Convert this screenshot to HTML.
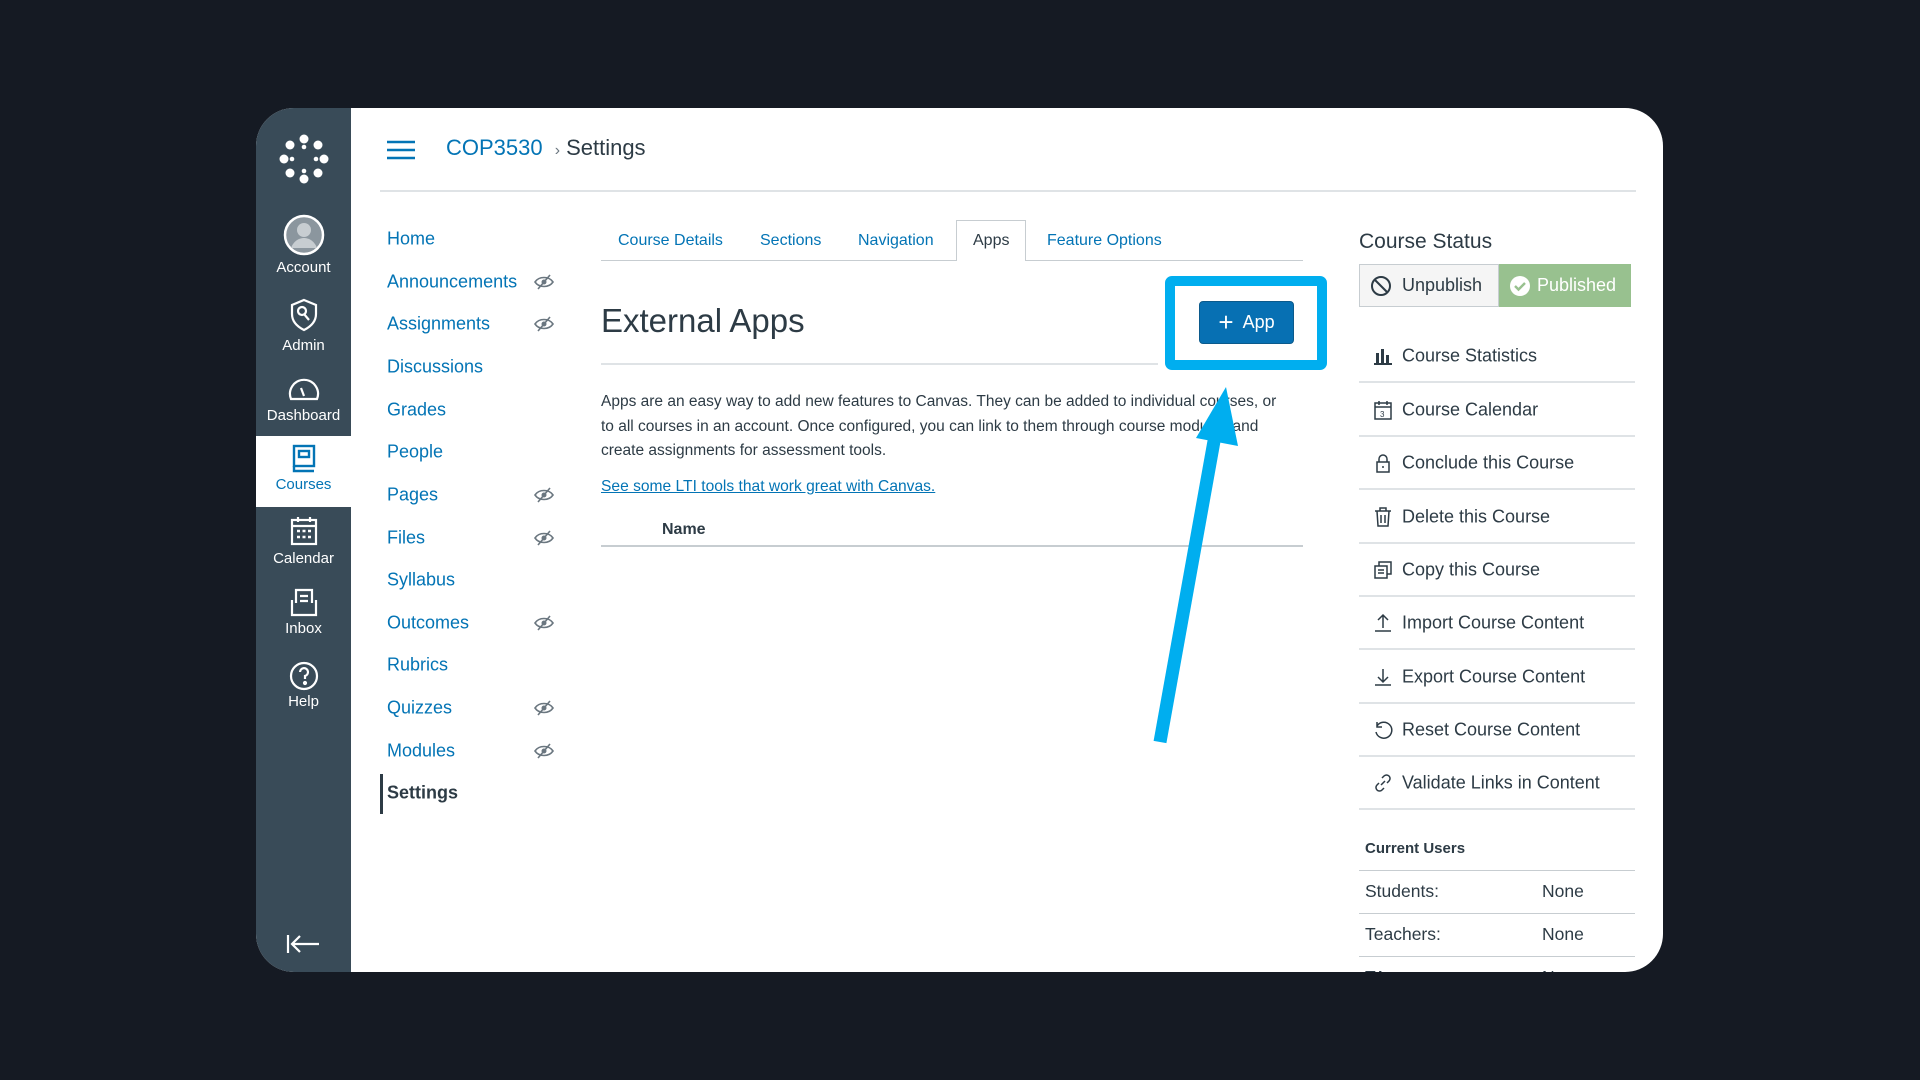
<!DOCTYPE html>
<html><head><meta charset="utf-8"><style>
*{margin:0;padding:0;box-sizing:border-box}
body{width:1920px;height:1080px;background:#151a23;font-family:"Liberation Sans",sans-serif;position:relative;overflow:hidden;color:#2d3b45}
.card{position:absolute;left:256px;top:108px;width:1407px;height:864px;background:#fff;border-radius:38px;overflow:hidden}
.side{position:absolute;left:0;top:0;width:95px;height:100%;background:#394b58}
.si{position:absolute;left:0;width:95px;text-align:center;color:#fff;font-size:15px}
.si svg{display:block;margin:0 auto}
.abs{position:absolute}
.nav a{position:absolute;left:131px;font-size:18px;color:#0374b5;text-decoration:none;transform:translateY(-50%)}
.eye{position:absolute;left:278px;transform:translateY(-50%)}
.tab{position:absolute;top:230px;font-size:16px;color:#0374b5}
.rl{position:absolute;left:1103px;width:276px;height:53px;border-bottom:2px solid #dfe3e6}
.rl span{position:absolute;left:43px;top:50%;transform:translateY(-50%);font-size:18px;color:#2d3b45}
.rl svg{position:absolute;left:14px;top:50%;transform:translateY(-50%)}
</style></head><body>
<div class="card">
 <div class="side">
  <svg class="abs" style="left:22px;top:25px" width="52" height="52" viewBox="0 0 52 52" fill="#fff">
   <circle cx="26" cy="6" r="4.5"/><circle cx="26" cy="46" r="4.5"/><circle cx="6" cy="26" r="4.5"/><circle cx="46" cy="26" r="4.5"/>
   <circle cx="12" cy="12" r="4.5"/><circle cx="40" cy="12" r="4.5"/><circle cx="12" cy="40" r="4.5"/><circle cx="40" cy="40" r="4.5"/>
   <circle cx="26" cy="14" r="2.3"/><circle cx="26" cy="38" r="2.3"/><circle cx="14" cy="26" r="2.3"/><circle cx="38" cy="26" r="2.3"/>
  </svg>
  <div class="si" style="top:106px"><svg width="42" height="42" viewBox="0 0 42 42"><circle cx="21" cy="21" r="19" fill="#8b969e" stroke="#fff" stroke-width="2.5"/><circle cx="21" cy="16" r="7" fill="#c7cdd1"/><path d="M8 34c3-8 9-10 13-10s10 2 13 10" fill="#c7cdd1"/></svg><div style="margin-top:3px">Account</div></div>
  <div class="si" style="top:190px"><svg width="30" height="34" viewBox="0 0 30 34" fill="none" stroke="#fff" stroke-width="2.2"><path d="M15 2l12 5v9c0 8-6 13-12 16C9 29 3 24 3 16V7z"/><circle cx="13" cy="13" r="4"/><path d="M15 16l5 6"/></svg><div style="margin-top:5px">Admin</div></div>
  <div class="si" style="top:268px"><svg width="34" height="26" viewBox="0 0 34 26" fill="none" stroke="#fff" stroke-width="2.2"><path d="M4 23a14 14 0 1 1 26 0z"/><path d="M17 20l-3-8"/></svg><div style="margin-top:5px">Dashboard</div></div>
  <div style="position:absolute;left:0;top:328px;width:95px;height:71px;background:#fff"></div>
  <div class="si" style="top:336px;color:#0374b5"><svg width="26" height="30" viewBox="0 0 26 30" fill="none" stroke="#0374b5" stroke-width="2.4"><rect x="3" y="2" width="20" height="20"/><rect x="8" y="7" width="10" height="6"/><path d="M3 22v5h20"/></svg><div style="margin-top:2px">Courses</div></div>
  <div class="si" style="top:408px"><svg width="28" height="30" viewBox="0 0 28 30" fill="none" stroke="#fff" stroke-width="2.2"><rect x="2" y="4" width="24" height="24"/><path d="M2 10h24M8 1v5M20 1v5"/><path d="M7 15h3M12.5 15h3M18 15h3M7 21h3M12.5 21h3M18 21h3" stroke-width="2.5"/></svg><div style="margin-top:4px">Calendar</div></div>
  <div class="si" style="top:480px"><svg width="30" height="30" viewBox="0 0 30 30" fill="none" stroke="#fff" stroke-width="2.2"><path d="M7 15V2h16v13M3 12v15h24V12"/><path d="M11 8h8M11 13h8"/></svg><div style="margin-top:2px">Inbox</div></div>
  <div class="si" style="top:553px"><svg width="30" height="30" viewBox="0 0 30 30" fill="none" stroke="#fff" stroke-width="2.2"><circle cx="15" cy="15" r="13"/><path d="M11 11a4 4 0 1 1 5 4v3"/><circle cx="16" cy="22" r="1" fill="#fff"/></svg><div style="margin-top:2px">Help</div></div>
  <svg class="abs" style="left:30px;top:826px" width="34" height="20" viewBox="0 0 34 20" fill="none" stroke="#fff" stroke-width="2.2"><path d="M2 1v18M6 10h27M14 2l-8 8 8 8"/></svg>
 </div>
 <svg class="abs" style="left:131px;top:32px" width="28" height="20"><path d="M0 2h28M0 10h28M0 18h28" stroke="#0374b5" stroke-width="2.4"/></svg>
 <div class="abs" style="left:190px;top:27px;font-size:22px;color:#0374b5">COP3530 <span style="color:#6b7780;font-size:16px;margin:0 6px">›</span><span style="color:#2d3b45">Settings</span></div>
 <div class="abs" style="left:124px;top:82px;width:1256px;height:2px;background:#dfe3e6"></div>
 <div class="nav">
  <a style="top:131px">Home</a><a style="top:174px">Announcements</a><a style="top:216px">Assignments</a><a style="top:259px">Discussions</a><a style="top:302px">Grades</a><a style="top:344px">People</a><a style="top:387px">Pages</a><a style="top:430px">Files</a><a style="top:472px">Syllabus</a><a style="top:515px">Outcomes</a><a style="top:557px">Rubrics</a><a style="top:600px">Quizzes</a><a style="top:643px">Modules</a><a style="top:685px;color:#2d3b45;font-weight:bold">Settings</a>
 </div>
 <div class="abs" style="left:124px;top:666px;width:3px;height:40px;background:#2d3b45"></div>
 <svg width="0" height="0" style="position:absolute"><defs><g id="eye"><path d="M1 8c4-6 14-6 18 0c-4 6-14 6-18 0z" fill="none" stroke="#6b7780" stroke-width="1.6"/><circle cx="10" cy="8" r="2.5" fill="#6b7780"/><path d="M4 15L16 1" stroke="#6b7780" stroke-width="1.6"/></g></defs></svg>
 <svg class="eye" style="top:174px" width="20" height="16"><use href="#eye"/></svg>
 <svg class="eye" style="top:216px" width="20" height="16"><use href="#eye"/></svg>
 <svg class="eye" style="top:387px" width="20" height="16"><use href="#eye"/></svg>
 <svg class="eye" style="top:430px" width="20" height="16"><use href="#eye"/></svg>
 <svg class="eye" style="top:515px" width="20" height="16"><use href="#eye"/></svg>
 <svg class="eye" style="top:600px" width="20" height="16"><use href="#eye"/></svg>
 <svg class="eye" style="top:643px" width="20" height="16"><use href="#eye"/></svg>

 <div class="abs" style="left:345px;top:152px;width:702px;height:1px;background:#c7cdd1"></div>
 <div class="abs" style="left:700px;top:112px;width:70px;height:41px;background:#fff;border:1px solid #c7cdd1;border-bottom:none"></div>
 <div class="tab" style="left:362px;top:124px">Course Details</div>
 <div class="tab" style="left:504px;top:124px">Sections</div>
 <div class="tab" style="left:602px;top:124px">Navigation</div>
 <div class="tab" style="left:717px;top:124px;color:#2d3b45">Apps</div>
 <div class="tab" style="left:791px;top:124px">Feature Options</div>

 <div class="abs" style="left:345px;top:194px;font-size:33px;color:#2d3b45">External Apps</div>
 <div class="abs" style="left:345px;top:255px;width:557px;height:2px;background:#dfe3e6"></div>
 <div class="abs" style="left:909px;top:168px;width:162px;height:94px;border:10px solid #00aeef;border-radius:7px;background:#fff"></div>
 <div class="abs" style="left:943px;top:193px;width:95px;height:43px;background:#0770b3;border:1px solid #0b5a8c;border-radius:4px;color:#fff;font-size:18px;line-height:41px;text-align:center"><span style="font-size:26px;font-weight:300;vertical-align:-3px">+</span>&nbsp; App</div>
 <div class="abs" style="left:345px;top:282px;width:690px;font-size:15.5px;line-height:24.5px;color:#2d3b45">Apps are an easy way to add new features to Canvas. They can be added to individual courses, or to all courses in an account. Once configured, you can link to them through course modules and create assignments for assessment tools.</div>
 <div class="abs" style="left:345px;top:370px;font-size:15.6px;color:#0374b5;text-decoration:underline">See some LTI tools that work great with Canvas.</div>
 <div class="abs" style="left:406px;top:413px;font-size:16px;font-weight:bold">Name</div>
 <div class="abs" style="left:345px;top:437px;width:702px;height:2px;background:#c7cdd1"></div>

 <div class="abs" style="left:1103px;top:122px;font-size:21px">Course Status</div>
 <div class="abs" style="left:1103px;top:156px;width:140px;height:43px;background:#f5f5f5;border:1px solid #c7cdd1;font-size:18px;line-height:41px;padding-left:42px">Unpublish</div>
 <svg class="abs" style="left:1114px;top:167px" width="22" height="22" fill="none" stroke="#2d3b45" stroke-width="2"><circle cx="11" cy="11" r="9"/><path d="M4.5 4.5l13 13"/></svg>
 <div class="abs" style="left:1243px;top:156px;width:132px;height:43px;background:#98c18f;font-size:18px;line-height:43px;padding-left:38px;color:#fff">Published</div>
 <svg class="abs" style="left:1253px;top:167px" width="22" height="22"><circle cx="11" cy="11" r="10" fill="#fff"/><path d="M6 11l3.5 3.5L16 8" fill="none" stroke="#98c18f" stroke-width="2.4"/></svg>

 <div class="rl" style="top:222px"><svg width="20" height="18" fill="#2d3b45"><rect x="3" y="6" width="3" height="10"/><rect x="8" y="2" width="3" height="14"/><rect x="13" y="8" width="3" height="8"/><rect x="1" y="16" width="18" height="2"/></svg><span>Course Statistics</span></div>
 <div class="rl" style="top:276px"><svg width="20" height="20" fill="none" stroke="#2d3b45" stroke-width="1.5"><rect x="2" y="3" width="16" height="16"/><path d="M2 7h16M6 1v4M14 1v4"/><text x="7" y="17" font-size="8" fill="#2d3b45" stroke="none">3</text></svg><span>Course Calendar</span></div>
 <div class="rl" style="top:329px"><svg width="20" height="20" fill="none" stroke="#2d3b45" stroke-width="1.5"><rect x="4" y="9" width="12" height="10"/><path d="M6 9V6a4 4 0 0 1 8 0v3M10 13v2"/></svg><span>Conclude this Course</span></div>
 <div class="rl" style="top:383px"><svg width="20" height="20" fill="none" stroke="#2d3b45" stroke-width="1.5"><path d="M2 4h16M7 4V1h6v3M4 4l1 15h10l1-15M8 8v8M12 8v8"/></svg><span>Delete this Course</span></div>
 <div class="rl" style="top:436px"><svg width="20" height="20" fill="none" stroke="#2d3b45" stroke-width="1.5"><rect x="2" y="6" width="12" height="12"/><path d="M6 6V2h12v12h-4M5 10h6M5 13h6"/></svg><span>Copy this Course</span></div>
 <div class="rl" style="top:489px"><svg width="20" height="20" fill="none" stroke="#2d3b45" stroke-width="1.5"><path d="M10 15V2M5 7l5-5 5 5M2 18h16"/></svg><span>Import Course Content</span></div>
 <div class="rl" style="top:543px"><svg width="20" height="20" fill="none" stroke="#2d3b45" stroke-width="1.5"><path d="M10 2v13M5 10l5 5 5-5M2 18h16"/></svg><span>Export Course Content</span></div>
 <div class="rl" style="top:596px"><svg width="20" height="20" fill="none" stroke="#2d3b45" stroke-width="1.5"><path d="M4 6a8 8 0 1 1-1 6M4 2v5h5"/></svg><span>Reset Course Content</span></div>
 <div class="rl" style="top:649px"><svg width="20" height="20" fill="none" stroke="#2d3b45" stroke-width="1.5"><path d="M8 12l4-4M9 5l2-2a3 3 0 0 1 5 5l-2 2M11 15l-2 2a3 3 0 0 1-5-5l2-2"/></svg><span>Validate Links in Content</span></div>

 <div class="abs" style="left:1109px;top:732px;font-size:15px;font-weight:bold">Current Users</div>
 <div class="abs" style="left:1103px;top:762px;width:276px;height:1px;background:#c7cdd1"></div>
 <div class="abs" style="left:1109px;top:773px;font-size:17.5px">Students:</div><div class="abs" style="left:1286px;top:773px;font-size:17.5px">None</div>
 <div class="abs" style="left:1103px;top:805px;width:276px;height:1px;background:#c7cdd1"></div>
 <div class="abs" style="left:1109px;top:816px;font-size:17.5px">Teachers:</div><div class="abs" style="left:1286px;top:816px;font-size:17.5px">None</div>
 <div class="abs" style="left:1103px;top:848px;width:276px;height:1px;background:#c7cdd1"></div>
 <div class="abs" style="left:1109px;top:859px;font-size:17.5px">TAs:</div><div class="abs" style="left:1286px;top:859px;font-size:17.5px">None</div>
</div>
<svg class="abs" style="left:0;top:0" width="1920" height="1080"><path d="M1160 742L1216 430" stroke="#00aeef" stroke-width="13" fill="none"/><path d="M1226 387L1238 446L1196 438z" fill="#00aeef"/></svg>
</body></html>
